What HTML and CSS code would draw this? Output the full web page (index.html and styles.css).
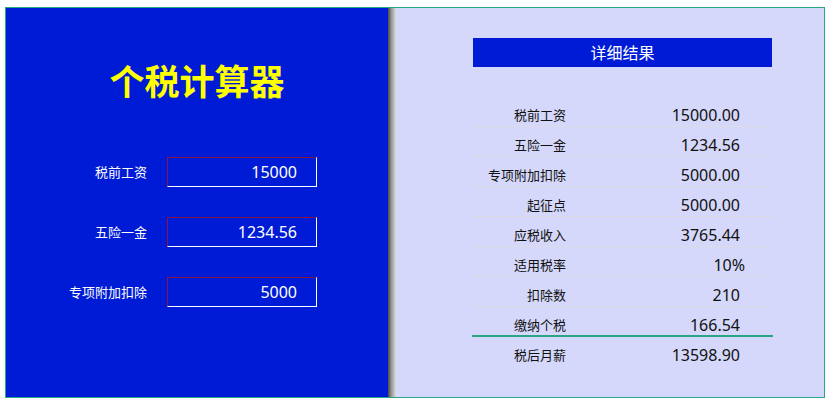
FILE: index.html
```html
<!DOCTYPE html>
<html lang="zh-CN">
<head>
<meta charset="utf-8">
<title>个税计算器</title>
<link rel="stylesheet" href="styles.css">
</head>
<body>
<div class="app">
  <section class="left">
    <h1 class="title">个税计算器</h1>
    <div class="form">
      <label class="label">税前工资</label>
      <input class="field" type="text" value="15000">
      <label class="label">五险一金</label>
      <input class="field" type="text" value="1234.56">
      <label class="label">专项附加扣除</label>
      <input class="field" type="text" value="5000">
    </div>
  </section>
  <div class="shade"></div>
  <section class="right">
    <div class="head">详细结果</div>
    <div class="table">
      <div class="row"><span class="k">税前工资</span><span class="v">15000.00</span></div>
      <div class="row"><span class="k">五险一金</span><span class="v">1234.56</span></div>
      <div class="row"><span class="k">专项附加扣除</span><span class="v">5000.00</span></div>
      <div class="row"><span class="k">起征点</span><span class="v">5000.00</span></div>
      <div class="row"><span class="k">应税收入</span><span class="v">3765.44</span></div>
      <div class="row"><span class="k">适用税率</span><span class="v pct">10%</span></div>
      <div class="row"><span class="k">扣除数</span><span class="v">210</span></div>
      <div class="row tax"><span class="k">缴纳个税</span><span class="v">166.54</span></div>
      <div class="row last"><span class="k">税后月薪</span><span class="v">13598.90</span></div>
    </div>
  </section>
</div>
</body>
</html>
```
FILE: styles.css
```css
html, body {
  margin: 0;
  padding: 0;
  background: #ffffff;
}
body {
  font-family: "Noto Sans", "Noto Sans CJK SC", sans-serif;
}
.app {
  margin: 7px 0 0 5px;
  width: 820px;
  height: 391px;
  box-sizing: border-box;
  border: 1px solid #2aa585;
  display: flex;
}
.left {
  width: 382px;
  background: #001bd6;
  display: flex;
  flex-direction: column;
}
.title {
  margin: 52px 0 0;
  font-family: "Noto Sans CJK SC", sans-serif;
  font-size: 35px;
  line-height: 40px;
  font-weight: 700;
  color: #ffff00;
  text-align: center;
}
.form {
  margin-top: 57px;
  display: grid;
  grid-template-columns: 141px 150px;
  column-gap: 20px;
  row-gap: 30px;
  align-items: center;
}
.label {
  text-align: right;
  color: #ffffff;
  font-family: "Noto Sans CJK SC", sans-serif;
  font-size: 13px;
  line-height: 20px;
}
.field {
  box-sizing: border-box;
  width: 150px;
  height: 30px;
  margin: 0;
  padding: 0 19px 0 4px;
  background: transparent;
  border-style: solid;
  border-width: 1px;
  border-color: #8a1244 #ffffff #ffffff #8a1244;
  color: #ffffff;
  font-family: "Noto Sans", "Noto Sans CJK SC", sans-serif;
  font-size: 16px;
  text-align: right;
  outline: none;
}
.shade {
  width: 8px;
  background: linear-gradient(to right, #4a4a4a, #9a9a9a 45%, #dedede);
}
.right {
  flex: 1;
  background: #d5d8fa;
  padding: 30px 0 0 77px;
}
.head {
  width: 299px;
  height: 29px;
  background: #001bd6;
  color: #ffffff;
  font-family: "Noto Sans CJK SC", sans-serif;
  font-size: 16px;
  line-height: 29px;
  text-align: center;
}
.table {
  margin: 30px 0 0 -1px;
  width: 301px;
}
.row {
  display: grid;
  grid-template-columns: 94px 1fr;
  padding: 8px 0 1px;
  border-bottom: 1px solid #dcdbe6;
  line-height: 20px;
}
.row.tax {
  padding-bottom: 0;
  border-bottom: 2px solid #2aa585;
}
.row.last {
  border-bottom: none;
}
.k {
  text-align: right;
  color: #111111;
  font-family: "Noto Sans CJK SC", sans-serif;
  font-size: 13px;
}
.v {
  text-align: right;
  padding-right: 33px;
  color: #111111;
  font-size: 16px;
}
.v.pct {
  padding-right: 28px;
}
```
